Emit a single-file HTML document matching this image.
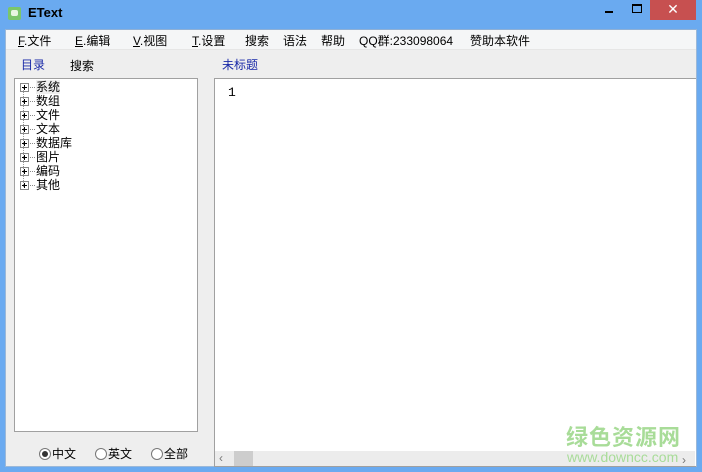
<!DOCTYPE html>
<html><head><meta charset="utf-8"><style>
*{margin:0;padding:0;box-sizing:border-box}
body{width:702px;height:472px;background:#6aaaf0;position:relative;overflow:hidden;font-family:"Liberation Sans","Noto Sans CJK SC",sans-serif;font-size:12px;color:#000}
.a{position:absolute}
#client{left:5px;top:29px;width:692px;height:438px;background:#eeeeee;border:1px solid #9bb8d8;border-top:1px solid #8fb0d5}
#menu{left:6px;top:30px;width:690px;height:20px;background:#f5f6f7;border-bottom:1px solid #e6e6e6}
.m{position:absolute;top:32px;font-size:12px;white-space:nowrap}
#tree{left:14px;top:78px;width:184px;height:354px;background:#fff;border:1px solid #a0a0a0}
#ed{left:214px;top:78px;width:482px;height:389px;background:#fff;border:1px solid #a0a0a0;border-right:none}
.ti{position:absolute;left:6px;font-size:12px;line-height:14px}
.ti b{display:inline-block;width:9px;height:9px;border:1px solid #888;position:relative;top:1px;margin-right:1px;font-weight:normal}
.ti b:before{content:"";position:absolute;left:1px;top:3px;width:5px;height:1px;background:#000}
.ti b:after{content:"";position:absolute;left:3px;top:1px;width:1px;height:5px;background:#000}
.ti i{display:inline-block;width:5px;border-top:1px dotted #888;vertical-align:middle;margin-right:1px}
.r{position:absolute;top:445px;font-size:12px}
.r span{display:inline-block;width:12px;height:12px;border:1px solid #777;border-radius:50%;vertical-align:-2px;margin-right:1px;background:#fff;position:relative}
.r span.on:after{content:"";position:absolute;left:2px;top:2px;width:6px;height:6px;border-radius:50%;background:#333}
</style></head><body>
<div class="a" style="left:8px;top:7px;width:13px;height:13px;background:#7bc66a;border-radius:2px"></div>
<div class="a" style="left:11px;top:10px;width:7px;height:6px;background:#e8f6e0;border-radius:2px"></div>
<div class="a" style="left:28px;top:5px;font-weight:bold;font-size:13px">EText</div>
<div class="a" style="left:605px;top:11px;width:8px;height:2px;background:#000"></div>
<div class="a" style="left:632px;top:4px;width:10px;height:9px;border:1px solid #000;border-top-width:2px"></div>
<div class="a" style="left:650px;top:0;width:46px;height:20px;background:#c75050;color:#fff;text-align:center;font-size:14px;line-height:19px">✕</div>
<div class="a" id="client"></div>
<div class="a" id="menu"></div>
<div class="m" style="left:18px"><u>F</u>.文件</div>
<div class="m" style="left:75px"><u>E</u>.编辑</div>
<div class="m" style="left:133px"><u>V</u>.视图</div>
<div class="m" style="left:192px"><u>T</u>.设置</div>
<div class="m" style="left:245px">搜索</div>
<div class="m" style="left:283px">语法</div>
<div class="m" style="left:321px">帮助</div>
<div class="m" style="left:359px">QQ群:233098064</div>
<div class="m" style="left:470px">赞助本软件</div>
<div class="a" style="left:21px;top:56px;color:#1a2aa8">目录</div>
<div class="a" style="left:70px;top:57px">搜索</div>
<div class="a" style="left:222px;top:56px;color:#1a2aa8">未标题</div>
<div class="a" id="tree"></div>
<div class="a" style="left:23px;top:87px;height:100px;border-left:1px dotted #999"></div>
<div class="ti" style="left:20px;top:80px"><b></b><i></i><span style="background:#eee">系统</span></div>
<div class="ti" style="left:20px;top:94px"><b></b><i></i>数组</div>
<div class="ti" style="left:20px;top:108px"><b></b><i></i>文件</div>
<div class="ti" style="left:20px;top:122px"><b></b><i></i>文本</div>
<div class="ti" style="left:20px;top:136px"><b></b><i></i>数据库</div>
<div class="ti" style="left:20px;top:150px"><b></b><i></i>图片</div>
<div class="ti" style="left:20px;top:164px"><b></b><i></i>编码</div>
<div class="ti" style="left:20px;top:178px"><b></b><i></i>其他</div>
<div class="a" id="ed"></div>
<div class="a" style="left:228px;top:85px;font-family:'Liberation Mono',monospace;font-size:13px">1</div>
<div class="a" style="left:215px;top:451px;width:480px;height:15px;background:#ececec"></div>
<div class="a" style="left:234px;top:451px;width:19px;height:15px;background:#cdcdcd"></div>
<div class="a" style="left:219px;top:451px;color:#777;font-size:12px">‹</div>
<div class="a" style="left:682px;top:453px;color:#777;font-size:12px">›</div>
<div class="a" style="left:566px;top:420px;color:#a8dc98;font-size:22px;font-weight:bold;letter-spacing:1px">绿色资源网</div>
<div class="a" style="left:567px;top:449px;color:#a8dc98;font-size:14px">www.downcc.com</div>
<div class="r" style="left:39px"><span class="on"></span>中文</div>
<div class="r" style="left:95px"><span></span>英文</div>
<div class="r" style="left:151px"><span></span>全部</div>
</body></html>
